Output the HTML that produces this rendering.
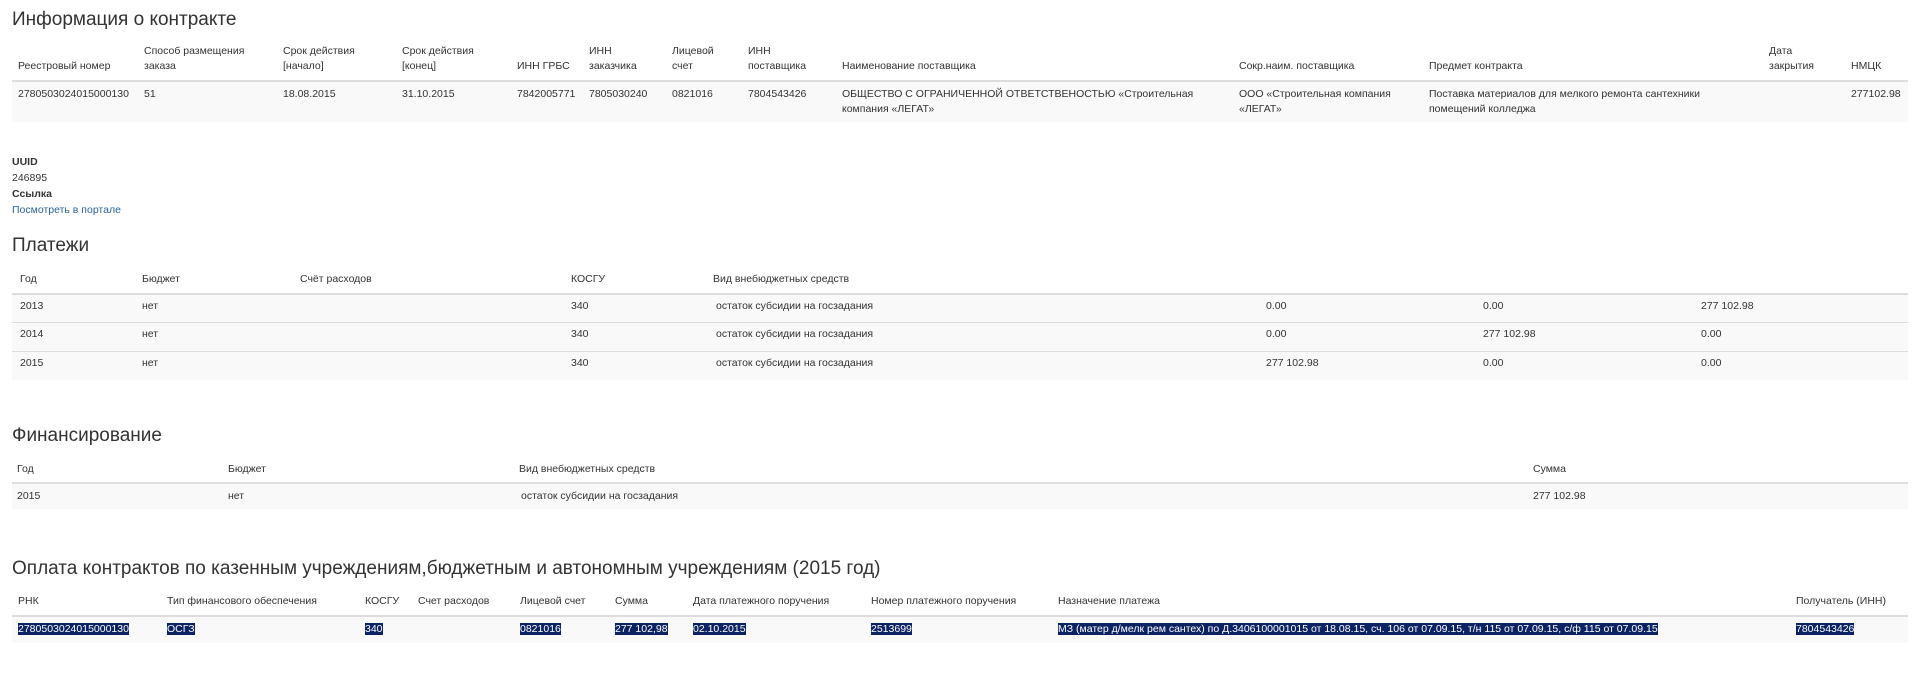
<!DOCTYPE html>
<html><head><meta charset="utf-8"><style>
body{margin:0;width:1920px;height:683px;background:#fff;font-family:"Liberation Sans",Arial,sans-serif;color:#333;position:relative;overflow:hidden}
.t{position:absolute;font-size:10.5px;line-height:15px;white-space:nowrap}
.h{position:absolute;font-size:19px;line-height:24px;white-space:nowrap;color:#333}
.bg{position:absolute;left:12px;width:1896px;background:#f9f9f9}
.ln{position:absolute;left:12px;width:1896px;height:0;border-top:1px solid #ddd}
.ln2{position:absolute;left:12px;width:1896px;height:0;border-top:2px solid #ddd}
.s{background:#0b2363;color:#fff}
a{color:#2a6496;text-decoration:none}
</style></head><body>
<div class="h" style="left:12px;top:8px">Информация о контракте</div>
<div class="bg" style="top:82px;height:40px"></div>
<div class="ln2" style="top:80px"></div>
<div class="t" style="left:18px;top:59px">Реестровый номер</div>
<div class="t" style="left:144px;top:44px">Способ размещения<br>заказа</div>
<div class="t" style="left:283px;top:44px">Срок действия<br>[начало]</div>
<div class="t" style="left:402px;top:44px">Срок действия<br>[конец]</div>
<div class="t" style="left:517px;top:59px">ИНН ГРБС</div>
<div class="t" style="left:589px;top:44px">ИНН<br>заказчика</div>
<div class="t" style="left:672px;top:44px">Лицевой<br>счет</div>
<div class="t" style="left:748px;top:44px">ИНН<br>поставщика</div>
<div class="t" style="left:842px;top:59px">Наименование поставщика</div>
<div class="t" style="left:1239px;top:59px">Сокр.наим. поставщика</div>
<div class="t" style="left:1429px;top:59px">Предмет контракта</div>
<div class="t" style="left:1769px;top:44px">Дата<br>закрытия</div>
<div class="t" style="left:1851px;top:59px">НМЦК</div>
<div class="t" style="left:18px;top:87px">2780503024015000130</div>
<div class="t" style="left:144px;top:87px">51</div>
<div class="t" style="left:283px;top:87px">18.08.2015</div>
<div class="t" style="left:402px;top:87px">31.10.2015</div>
<div class="t" style="left:517px;top:87px">7842005771</div>
<div class="t" style="left:589px;top:87px">7805030240</div>
<div class="t" style="left:672px;top:87px">0821016</div>
<div class="t" style="left:748px;top:87px">7804543426</div>
<div class="t" style="left:842px;top:87px">ОБЩЕСТВО С ОГРАНИЧЕННОЙ ОТВЕТСТВЕНОСТЬЮ «Строительная<br>компания «ЛЕГАТ»</div>
<div class="t" style="left:1239px;top:87px">ООО «Строительная компания<br>«ЛЕГАТ»</div>
<div class="t" style="left:1429px;top:87px">Поставка материалов для мелкого ремонта сантехники<br>помещений колледжа</div>
<div class="t" style="left:1851px;top:87px">277102.98</div>

<div class="t" style="left:12px;top:155px;font-weight:bold">UUID</div>
<div class="t" style="left:12px;top:171px">246895</div>
<div class="t" style="left:12px;top:187px;font-weight:bold">Ссылка</div>
<div class="t" style="left:12px;top:203px"><a>Посмотреть в портале</a></div>

<div class="h" style="left:12px;top:234px">Платежи</div>
<div class="ln2" style="top:293px"></div>
<div class="bg" style="top:295px;height:85px"></div>
<div class="ln" style="top:322px"></div>
<div class="ln" style="top:351px"></div>
<div class="t" style="left:20px;top:272px">Год</div>
<div class="t" style="left:142px;top:272px">Бюджет</div>
<div class="t" style="left:300px;top:272px">Счёт расходов</div>
<div class="t" style="left:571px;top:272px">КОСГУ</div>
<div class="t" style="left:713px;top:272px">Вид внебюджетных средств</div>
<div class="t" style="left:20px;top:299px">2013</div><div class="t" style="left:142px;top:299px">нет</div><div class="t" style="left:571px;top:299px">340</div><div class="t" style="left:716px;top:299px">остаток субсидии на госзадания</div><div class="t" style="left:1266px;top:299px">0.00</div><div class="t" style="left:1483px;top:299px">0.00</div><div class="t" style="left:1701px;top:299px">277 102.98</div>
<div class="t" style="left:20px;top:327px">2014</div><div class="t" style="left:142px;top:327px">нет</div><div class="t" style="left:571px;top:327px">340</div><div class="t" style="left:716px;top:327px">остаток субсидии на госзадания</div><div class="t" style="left:1266px;top:327px">0.00</div><div class="t" style="left:1483px;top:327px">277 102.98</div><div class="t" style="left:1701px;top:327px">0.00</div>
<div class="t" style="left:20px;top:356px">2015</div><div class="t" style="left:142px;top:356px">нет</div><div class="t" style="left:571px;top:356px">340</div><div class="t" style="left:716px;top:356px">остаток субсидии на госзадания</div><div class="t" style="left:1266px;top:356px">277 102.98</div><div class="t" style="left:1483px;top:356px">0.00</div><div class="t" style="left:1701px;top:356px">0.00</div>

<div class="h" style="left:12px;top:424px">Финансирование</div>
<div class="ln2" style="top:482px"></div>
<div class="bg" style="top:484px;height:25px"></div>
<div class="t" style="left:17px;top:462px">Год</div>
<div class="t" style="left:228px;top:462px">Бюджет</div>
<div class="t" style="left:519px;top:462px">Вид внебюджетных средств</div>
<div class="t" style="left:1533px;top:462px">Сумма</div>
<div class="t" style="left:17px;top:489px">2015</div>
<div class="t" style="left:228px;top:489px">нет</div>
<div class="t" style="left:521px;top:489px">остаток субсидии на госзадания</div>
<div class="t" style="left:1533px;top:489px">277 102.98</div>

<div class="h" style="left:12px;top:557px">Оплата контрактов по казенным учреждениям,бюджетным и автономным учреждениям (2015 год)</div>
<div class="ln2" style="top:615px"></div>
<div class="bg" style="top:617px;height:26px"></div>
<div class="t" style="left:18px;top:594px">РНК</div>
<div class="t" style="left:167px;top:594px">Тип финансового обеспечения</div>
<div class="t" style="left:365px;top:594px">КОСГУ</div>
<div class="t" style="left:418px;top:594px">Счет расходов</div>
<div class="t" style="left:520px;top:594px">Лицевой счет</div>
<div class="t" style="left:615px;top:594px">Сумма</div>
<div class="t" style="left:693px;top:594px">Дата платежного поручения</div>
<div class="t" style="left:871px;top:594px">Номер платежного поручения</div>
<div class="t" style="left:1058px;top:594px">Назначение платежа</div>
<div class="t" style="left:1796px;top:594px">Получатель (ИНН)</div>
<div class="t" style="left:18px;top:622px"><span class="s">2780503024015000130</span></div>
<div class="t" style="left:167px;top:622px"><span class="s">ОСГЗ</span></div>
<div class="t" style="left:365px;top:622px"><span class="s">340</span></div>
<div class="t" style="left:520px;top:622px"><span class="s">0821016</span></div>
<div class="t" style="left:615px;top:622px"><span class="s">277 102,98</span></div>
<div class="t" style="left:693px;top:622px"><span class="s">02.10.2015</span></div>
<div class="t" style="left:871px;top:622px"><span class="s">2513699</span></div>
<div class="t" style="left:1058px;top:622px"><span class="s">МЗ (матер д/мелк рем сантех) по Д.3406100001015 от 18.08.15, сч. 106 от 07.09.15, т/н 115 от 07.09.15, с/ф 115 от 07.09.15</span></div>
<div class="t" style="left:1796px;top:622px"><span class="s">7804543426</span></div>
</body></html>
